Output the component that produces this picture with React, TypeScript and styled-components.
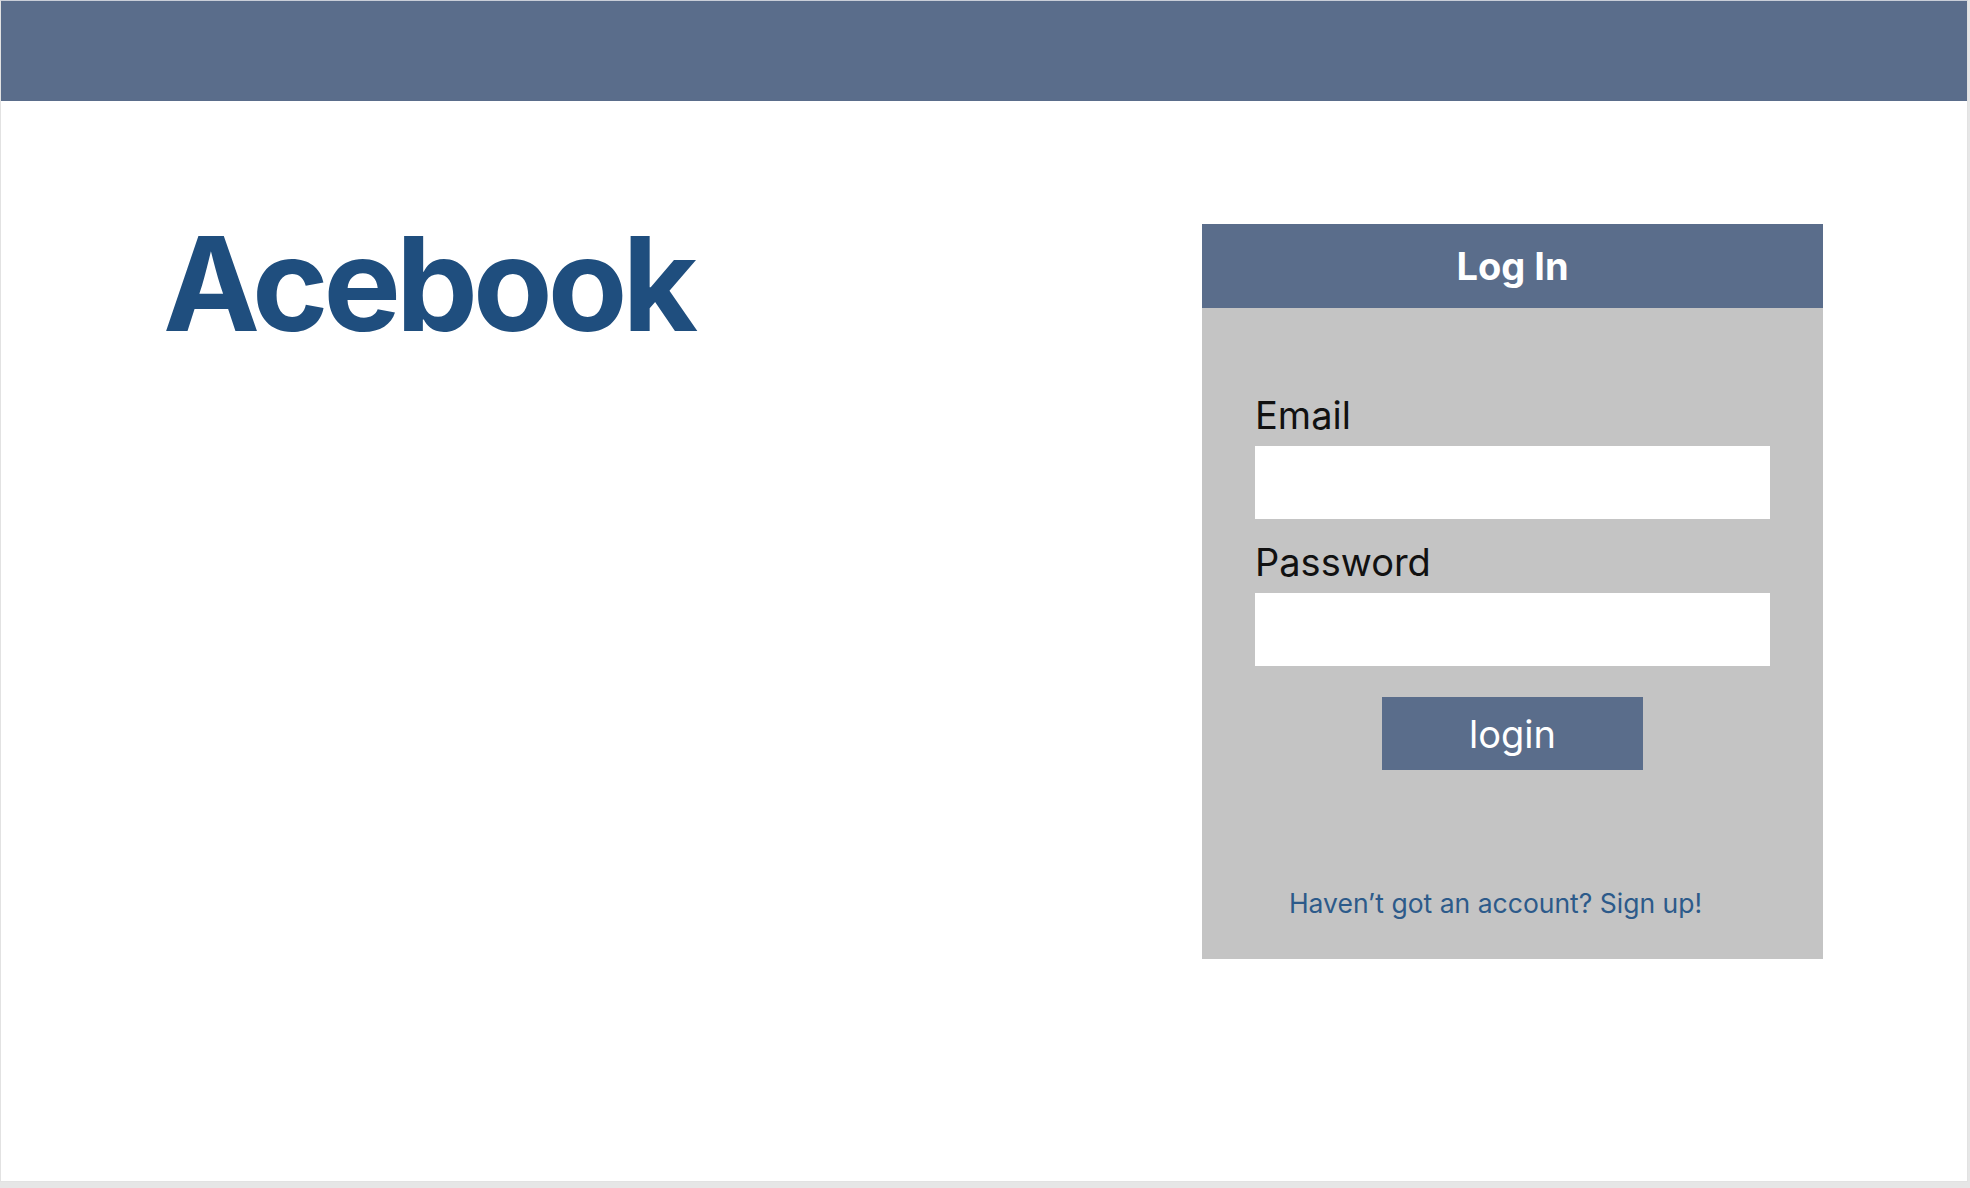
import React from "react";
import styled, { createGlobalStyle } from "styled-components";

const GlobalStyle = createGlobalStyle`
  html, body {
    margin: 0;
    padding: 0;
    background: #e6e6e6;
  }
  body {
    font-family: Inter, "Noto Sans", "Liberation Sans", sans-serif;
  }
  * { box-sizing: border-box; }
`;

const Frame = styled.div`
  width: 1968px;
  height: 1182px;
  background: #ffffff;
  border: 1px solid #e2e2e2;
  border-top: 1px solid #c9ced8;
  display: flex;
  flex-direction: column;
`;

const TopBar = styled.header`
  height: 100px;
  background: #5a6d8b;
  flex-shrink: 0;
`;

const Main = styled.main`
  display: flex;
  justify-content: space-between;
  align-items: flex-start;
  padding: 123px 144px 0 166px;
`;

const Logo = styled.h1`
  margin: -5px 0 0 -4px;
  font-family: Inter, "Liberation Sans", sans-serif;
  font-weight: 700;
  font-size: 130px;
  line-height: 1;
  color: #1f4e7e;
  letter-spacing: -5px;
`;

const Card = styled.section`
  width: 621px;
  background: #c4c4c4;
  display: flex;
  flex-direction: column;
`;

const CardHeader = styled.div`
  height: 84px;
  background: #5a6d8b;
  color: #ffffff;
  font-weight: 700;
  font-size: 38px;
  display: flex;
  align-items: center;
  justify-content: center;
`;

const CardBody = styled.form`
  display: flex;
  flex-direction: column;
  padding: 85px 53px 40px;
`;

const Label = styled.label<{ $gap: number }>`
  display: block;
  margin-top: ${(p) => p.$gap}px;
  font-size: 38px;
  line-height: 44px;
  color: #111111;
`;

const Input = styled.input`
  display: block;
  width: 100%;
  height: 73px;
  margin-top: 9px;
  border: none;
  outline: none;
  background: #ffffff;
  font-size: 28px;
  padding: 0 16px;
`;

const Button = styled.button`
  align-self: center;
  width: 261px;
  height: 73px;
  margin-top: 31px;
  border: none;
  background: #5a6d8b;
  color: #ffffff;
  font-family: Inter, "Liberation Sans", sans-serif;
  font-size: 38px;
  cursor: pointer;
`;

const SignUp = styled.a`
  align-self: center;
  margin-top: 117px;
  margin-right: 34px;
  font-size: 26.5px;
  line-height: 32px;
  color: #2c5a8a;
  text-decoration: none;
`;

export default function App() {
  return (
    <>
      <GlobalStyle />
      <Frame>
        <TopBar />
        <Main>
          <Logo>Acebook</Logo>
          <Card>
            <CardHeader>Log In</CardHeader>
            <CardBody onSubmit={(e) => e.preventDefault()}>
              <Label $gap={0} htmlFor="email">Email</Label>
              <Input id="email" type="email" />
              <Label $gap={21} htmlFor="password">Password</Label>
              <Input id="password" type="password" />
              <Button type="submit">login</Button>
              <SignUp href="#">Haven’t got an account? Sign up!</SignUp>
            </CardBody>
          </Card>
        </Main>
      </Frame>
    </>
  );
}
